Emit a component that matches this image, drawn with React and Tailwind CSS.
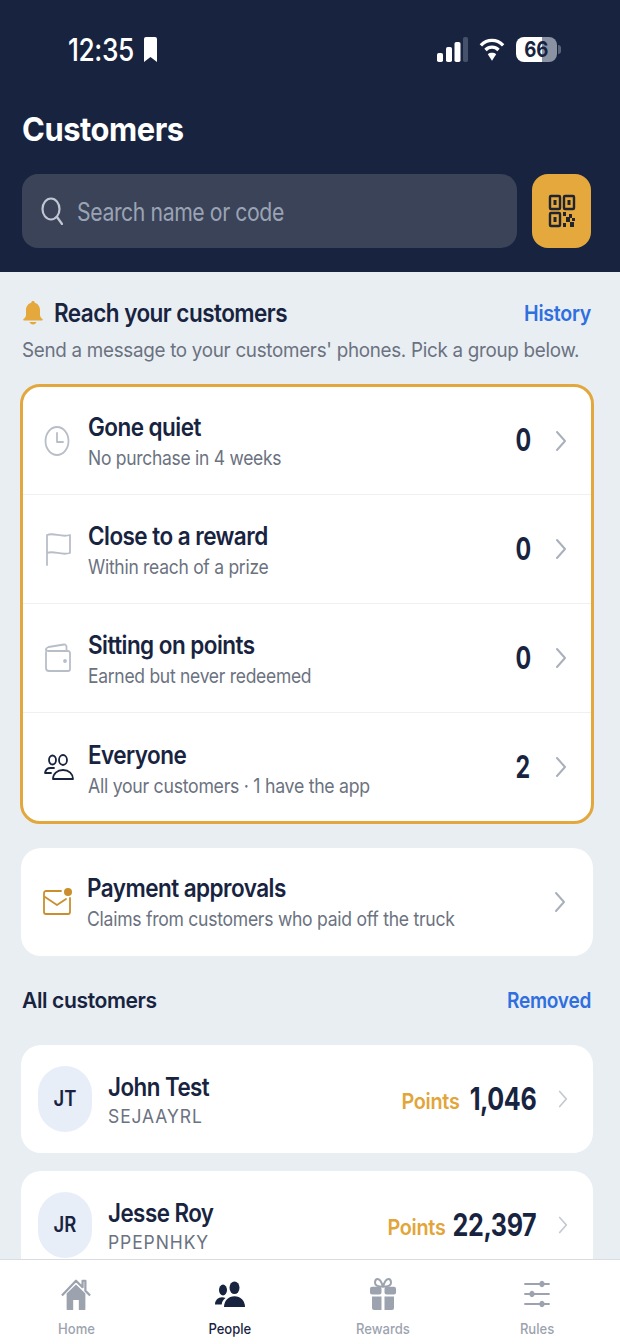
import React from 'react';

const font = 'font-["Inter","Noto_Sans",sans-serif]';

function ClockIcon() {
  return (
    <svg width="26" height="32" viewBox="0 0 26 32" fill="none" stroke="#b8bec8" strokeWidth="1.8" strokeLinecap="round" strokeLinejoin="round">
      <ellipse cx="13" cy="16" rx="11.500" ry="14" />
      <path d="M13 8v9h6" />
    </svg>
  );
}

function FlagIcon() {
  return (
    <svg width="28" height="36" viewBox="0 0 28 36" fill="none" stroke="#b8bec8" strokeWidth="1.8" strokeLinecap="round" strokeLinejoin="round">
      <path d="M3 34V4c7-3 14 3 23 0v18c-9 3-16-3-23 0" />
    </svg>
  );
}

function WalletIcon() {
  return (
    <svg width="28" height="30" viewBox="0 0 28 30" fill="none" stroke="#b8bec8" strokeWidth="1.8" strokeLinecap="round" strokeLinejoin="round">
      <path d="M2 9V25a3 3 0 0 0 3 3h19a2 2 0 0 0 2-2V10a2 2 0 0 0-2-2H4.500a2.500 2.500 0 0 1-2.500-1.500" />
      <path d="M2 7c0-1.500 1-2.500 2.500-3L20 1.500c1.500-.2 2.500.8 2.500 2.500V8" />
      <circle cx="21" cy="18" r="1" fill="#b8bec8" />
    </svg>
  );
}

function PeopleOutlineIcon() {
  return (
    <svg width="30" height="27" viewBox="0 0 30 27" fill="none" stroke="#18243f" strokeWidth="1.8" strokeLinecap="round" strokeLinejoin="round">
      <ellipse cx="8.500" cy="6" rx="3.500" ry="4.500" />
      <ellipse cx="19" cy="6" rx="4" ry="5" />
      <path d="M10 14H6.500C3.500 14 1.500 16 1 19h6" />
      <path d="M9 25c0-5 4-9 10-9s10 4 10 9z" />
    </svg>
  );
}

function MailIcon() {
  return (
    <svg width="30" height="30" viewBox="0 0 30 30" fill="none">
      <path d="M19 4H4a2 2 0 0 0-2 2v19a2 2 0 0 0 2 2h22a2 2 0 0 0 2-2V11" stroke="#c98f2e" strokeWidth="1.8" strokeLinecap="round" />
      <path d="M3 10l12 8 9-6" stroke="#c98f2e" strokeWidth="1.8" strokeLinecap="round" strokeLinejoin="round" />
      <circle cx="26" cy="5" r="4" fill="#c98f2e" />
    </svg>
  );
}

function QrIcon() {
  return (
    <svg width="28" height="34" viewBox="0 0 28 34" fill="none" stroke="#1f2430" strokeWidth="2.400">
      <rect x="2" y="2" width="10" height="13" rx="1" />
      <rect x="16" y="2" width="10" height="13" rx="1" />
      <rect x="2" y="19" width="10" height="13" rx="1" />
      <rect x="5.500" y="6" width="3" height="5" fill="#1f2430" stroke="none" />
      <rect x="19.500" y="6" width="3" height="5" fill="#1f2430" stroke="none" />
      <rect x="5.500" y="23" width="3" height="5" fill="#1f2430" stroke="none" />
      <path d="M15 18h3v4h-3zM21 20h3v4h-3zM18 23h4v5h-4zM24 24h3v3h-3zM15 29h3v4h-3zM22 28h4v5h-4z" fill="#1f2430" stroke="none" />
    </svg>
  );
}

function BellIcon() {
  return (
    <svg width="20" height="26" viewBox="0 0 20 26" fill="#e4a83c">
      <path d="M10 1c1 0 1.700.7 1.800 1.700C15 3.600 17 6.500 17 10v5c0 1.500 1 3 2.500 4 .5.400.3 1.500-.5 1.500H1c-.8 0-1-1.100-.5-1.500C2 18 3 16.500 3 15v-5c0-3.500 2-6.400 5.200-7.300C8.300 1.700 9 1 10 1z" />
      <path d="M6.500 22h7c-.4 1.500-1.900 2.500-3.500 2.500S6.900 23.500 6.500 22z" />
    </svg>
  );
}

function SearchGlyph() {
  return (
    <svg width="22" height="28" viewBox="0 0 22 28" fill="none" stroke="#c0c6d2" strokeWidth="2.200" strokeLinecap="round">
      <ellipse cx="10" cy="12" rx="8.500" ry="10.500" />
      <path d="M16 20l5 7" />
    </svg>
  );
}

function HomeIcon() {
  return (
    <svg width="30" height="33" viewBox="0 0 32 36" fill="#9ca3af" preserveAspectRatio="none">
      <path d="M6 17L16 7l10 10v17a1 1 0 0 1-1 1h-6V24h-6v11H7a1 1 0 0 1-1-1z" />
      <path d="M1 19L16 3l7 7V3h3v11l5 5" fill="none" stroke="#9ca3af" strokeWidth="2.400" strokeLinejoin="round" />
    </svg>
  );
}

function PeopleSolidIcon() {
  return (
    <svg width="30" height="27" viewBox="0 0 30 30" fill="#18243f" preserveAspectRatio="none" className="mb-[3px]">
      <ellipse cx="8" cy="10" rx="4" ry="6" />
      <ellipse cx="19.500" cy="7.500" rx="5" ry="7" />
      <path d="M9 29c0-7 4.500-12 10.500-12S30 22 30 29z" />
      <path d="M0 26c0-4.500 3-8 7-8 1.400 0 2.500.3 3.500 1C8 21 7 23.500 6.700 26z" />
    </svg>
  );
}

function GiftIcon() {
  return (
    <svg width="26" height="33" viewBox="0 0 26 34" fill="#9ca3af" preserveAspectRatio="none">
      <path d="M13 9C11 2 9 1 7.500 1 5.500 1 5 3 5 5c0 2 2 4 8 4zm0 0c2-7 4-8 5.500-8C20.500 1 21 3 21 5c0 2-2 4-8 4z" fill="none" stroke="#9ca3af" strokeWidth="2" />
      <rect x="0" y="9" width="11.500" height="8" rx="2" />
      <rect x="14.500" y="9" width="11.500" height="8" rx="2" />
      <path d="M2 19h9.500v14H4a2 2 0 0 1-2-2z" />
      <path d="M14.500 19H24v12a2 2 0 0 1-2 2h-7.500z" />
    </svg>
  );
}

function SlidersIcon() {
  return (
    <svg width="26" height="28" viewBox="0 0 26 28" fill="#9ca3af" stroke="#9ca3af" strokeLinecap="round" className="mb-[3px]">
      <path d="M1 4h24M1 14h24M1 24h24" strokeWidth="1.800" />
      <ellipse cx="18" cy="4" rx="2.200" ry="2.800" />
      <ellipse cx="8" cy="14" rx="2.200" ry="2.800" />
      <ellipse cx="18" cy="24" rx="2.200" ry="2.800" />
    </svg>
  );
}

function Chevron({ small }) {
  return (
    <svg
      width={small ? 10 : 12}
      height={small ? 20 : 22}
      viewBox="0 0 12 22"
      fill="none"
      stroke={small ? '#c3c8d1' : '#a9afbb'}
      strokeWidth="2"
      strokeLinecap="round"
      strokeLinejoin="round"
      className="shrink-0"
    >
      <path d="M2 2l8 9-8 9" />
    </svg>
  );
}

function StatusBar() {
  return (
    <div className="flex items-center justify-between pl-[68px] pr-[59px] h-[34px]">
      <div className="flex items-center">
        <div className="w-[67px] mr-[8px]">
          <span className="block origin-left scale-x-[0.85] text-[31px] font-medium leading-none text-white tracking-[-0.5px]">12:35</span>
        </div>
        <svg width="15" height="27" viewBox="0 0 15 27" fill="#fff">
          <path d="M1 3a2 2 0 0 1 2-2h9a2 2 0 0 1 2 2v23l-6.500-5L1 26z" />
        </svg>
      </div>
      <div className="flex items-center gap-[11px]">
        <svg width="31" height="25" viewBox="0 0 31 25">
          <rect x="0" y="16" width="6" height="9" rx="1.800" fill="#fff" />
          <rect x="9" y="10" width="6" height="15" rx="1.800" fill="#fff" />
          <rect x="17.500" y="5" width="6" height="20" rx="1.800" fill="#fff" />
          <rect x="26" y="0" width="5" height="25" rx="1.800" fill="#45506a" />
        </svg>
        <svg width="26" height="25" viewBox="0 0 28 26" fill="none" stroke="#fff" strokeWidth="3.600">
          <path d="M2 8.500c7-7 17-7 24 0" />
          <path d="M7 13.500c4-4 10-4 14 0" />
          <path d="M14 25l-4.500-7c2.500-2 6.500-2 9 0z" fill="#fff" stroke="none" />
        </svg>
        <div className="flex items-center gap-[1px]">
          <div className="w-[41px] h-[25px] rounded-[8px] bg-[linear-gradient(90deg,#fff_63%,#8b92a2_63%)] flex items-center justify-center">
            <span className="scale-x-[0.85] text-[22px] font-bold leading-none text-[#18243f]">66</span>
          </div>
          <div className="w-[3px] h-[9px] rounded-r-sm bg-[#5c6578]" />
        </div>
      </div>
    </div>
  );
}

function GroupRow({ icon, title, sub, subScale, count, rowClass, textClass, last }) {
  return (
    <div className={`flex items-center ${rowClass} pl-[21px] pr-[24px] ${last ? '' : 'border-b border-[#eef0f3]'}`}>
      <div className="w-[44px] flex justify-start shrink-0">{icon}</div>
      <div className={`flex-1 min-w-0 whitespace-nowrap ${textClass}`}>
        <div className="origin-left scale-x-[0.9] text-[25px] leading-[32px] font-semibold text-[#18243f] tracking-[-0.6px]">{title}</div>
        <div className={`origin-left ${subScale} text-[20px] leading-[26px] text-[#6b7280] tracking-[-0.3px] mt-[2px]`}>{sub}</div>
      </div>
      <div className="w-[20px] mr-[22px] flex justify-center">
        <span className="scale-x-[0.75] text-[31px] font-bold text-[#18243f]">{count}</span>
      </div>
      <Chevron />
    </div>
  );
}

function CustomerCard({ initials, name, code, numberBox, points }) {
  return (
    <div className="flex items-center h-[108px] rounded-[20px] bg-white pl-[17px] pr-[25px] shrink-0">
      <div className="w-[54px] h-[66px] rounded-full bg-[#e8eef8] flex items-center justify-center shrink-0">
        <span className="scale-x-[0.88] text-[21px] font-semibold text-[#18243f]">{initials}</span>
      </div>
      <div className="flex-1 ml-[16px] mt-[2px] min-w-0 whitespace-nowrap">
        <div className="origin-left scale-x-[0.895] text-[25px] leading-[32px] font-semibold text-[#18243f] tracking-[-0.6px]">{name}</div>
        <div className="origin-left scale-x-[0.92] text-[19px] leading-[26px] mt-[1px] text-[#6b7280] tracking-[1px]">{code}</div>
      </div>
      <div className="w-[57px] mr-[8px] mt-[5px] flex justify-end">
        <span className="shrink-0 origin-right scale-x-[0.9] text-[22px] font-semibold text-[#e2a53a] tracking-[-0.3px]">Points</span>
      </div>
      <div className={`${numberBox} mr-[22px] flex justify-end`}>
        <span className="shrink-0 origin-right scale-x-[0.81] text-[31px] font-bold text-[#18243f] tracking-[-0.5px]">{points}</span>
      </div>
      <Chevron small />
    </div>
  );
}

function NavItem({ icon, label, active }) {
  return (
    <div className="flex flex-col items-center justify-end w-[90px] h-[72px]">
      <div className="h-[38px] flex items-end">{icon}</div>
      <span className={`mt-[9px] scale-x-[0.9] text-[14.500px] leading-[18px] font-medium ${active ? 'text-[#18243f]' : 'text-[#9ca3af]'}`}>{label}</span>
    </div>
  );
}

export default function App() {
  return (
    <div className={`flex flex-col w-[620px] h-[1344px] overflow-hidden bg-[#e9eef3] ${font}`}>
      <header className="h-[272px] shrink-0 bg-[#18243f] pt-[32px]">
        <StatusBar />
        <h1 className="mt-[41px] ml-[22px] origin-left scale-x-[0.936] text-[33px] leading-[44px] font-bold text-white tracking-[-0.5px]">Customers</h1>
        <div className="flex gap-[15px] pl-[22px] pr-[29px] mt-[23px]">
          <div className="flex-1 flex items-center h-[74px] rounded-[16px] bg-[#3a4358] pl-[19px]">
            <SearchGlyph />
            <span className="ml-[14px] mt-[3px] origin-left scale-x-[0.85] text-[25px] text-[#9aa3b4] tracking-[-0.5px]">Search name or code</span>
          </div>
          <div className="w-[59px] h-[74px] rounded-[16px] bg-[#e4a83c] flex items-center justify-center">
            <QrIcon />
          </div>
        </div>
      </header>

      <main className="flex-1 min-h-0 overflow-hidden flex flex-col px-[20px]">
        <div className="flex items-center justify-between mt-[26px] pl-[3px] pr-[9px]">
          <div className="flex items-center gap-[11px]">
            <BellIcon />
            <span className="origin-left scale-x-[0.9] text-[25px] leading-[30px] font-semibold text-[#18243f] tracking-[-0.6px]">Reach your customers</span>
          </div>
          <span className="origin-right scale-x-[0.893] text-[22px] leading-[30px] font-semibold text-[#2f6fe0] tracking-[-0.3px]">History</span>
        </div>
        <p className="mt-[8px] ml-[2px] origin-left scale-x-[0.94] text-[20px] leading-[28px] text-[#6b7280] tracking-[-0.3px] whitespace-nowrap">
          Send a message to your customers' phones. Pick a group below.
        </p>

        <div className="mt-[20px] rounded-[20px] border-[3px] border-[#e2a83e] bg-white w-[574px] shrink-0">
          <GroupRow icon={<ClockIcon />} title="Gone quiet" sub="No purchase in 4 weeks" subScale="scale-x-[0.873]" count="0" rowClass="h-[108px]" textClass="mt-[1px]" />
          <GroupRow icon={<FlagIcon />} title="Close to a reward" sub="Within reach of a prize" subScale="scale-x-[0.873]" count="0" rowClass="h-[109px]" textClass="mt-[2px]" />
          <GroupRow icon={<WalletIcon />} title="Sitting on points" sub="Earned but never redeemed" subScale="scale-x-[0.873]" count="0" rowClass="h-[109px]" textClass="mt-[2px]" />
          <GroupRow icon={<PeopleOutlineIcon />} title="Everyone" sub="All your customers · 1 have the app" subScale="scale-x-[0.884]" count="2" rowClass="h-[108px]" textClass="mt-[4px]" last />
        </div>

        <div className="mt-[24px] flex items-center h-[108px] rounded-[20px] bg-white pl-[21px] pr-[27px] ml-[1px] w-[572px] shrink-0">
          <div className="w-[45px] shrink-0"><MailIcon /></div>
          <div className="flex-1 min-w-0 whitespace-nowrap">
            <div className="origin-left scale-x-[0.9] text-[25px] leading-[32px] font-semibold text-[#18243f] tracking-[-0.6px]">Payment approvals</div>
            <div className="origin-left scale-x-[0.878] text-[20px] leading-[26px] text-[#6b7280] tracking-[-0.3px] mt-[2px]">Claims from customers who paid off the truck</div>
          </div>
          <Chevron />
        </div>

        <div className="flex items-center justify-between mt-[29px] pl-[2px] pr-[9px]">
          <span className="origin-left scale-x-[0.957] text-[22px] leading-[30px] font-semibold text-[#18243f] tracking-[-0.4px]">All customers</span>
          <span className="origin-right scale-x-[0.866] text-[22px] leading-[30px] font-semibold text-[#2f6fe0] tracking-[-0.3px]">Removed</span>
        </div>

        <div className="mt-[30px] ml-[1px] w-[572px] flex flex-col gap-[18px]">
          <CustomerCard initials="JT" name="John Test" code="SEJAAYRL" numberBox="w-[68px]" points="1,046" />
          <CustomerCard initials="JR" name="Jesse Roy" code="PPEPNHKY" numberBox="w-[82px]" points="22,397" />
        </div>
      </main>

      <nav className="h-[85px] shrink-0 bg-white border-t border-[#d9dce1] flex justify-between pl-[31px] pr-[38px] pt-[6px]">
        <NavItem icon={<HomeIcon />} label="Home" />
        <NavItem icon={<PeopleSolidIcon />} label="People" active />
        <NavItem icon={<GiftIcon />} label="Rewards" />
        <NavItem icon={<SlidersIcon />} label="Rules" />
      </nav>
    </div>
  );
}
